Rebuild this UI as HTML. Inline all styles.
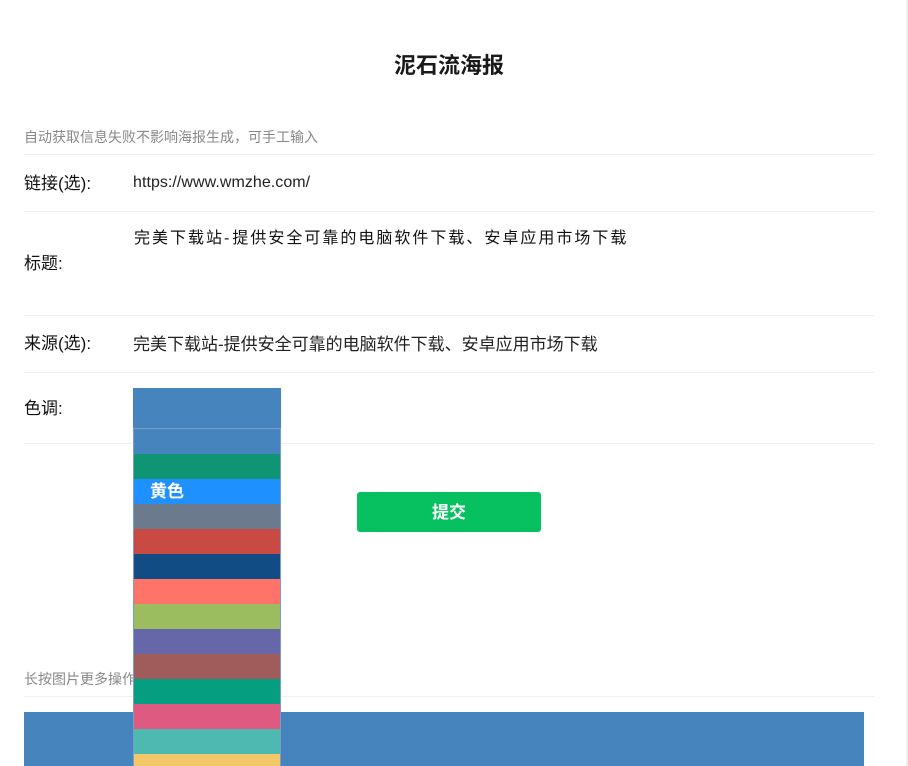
<!DOCTYPE html>
<html lang="zh">
<head>
<meta charset="utf-8">
<style>
html,body{margin:0;padding:0;width:908px;height:766px;overflow:hidden;background:#fff}
body{position:relative;font-family:"Liberation Sans","WenQuanYi Zen Hei","Noto Sans CJK SC",sans-serif;color:#111}
.a{position:absolute;white-space:nowrap}
.line{position:absolute;left:24px;width:850px;height:1px;background:#f0f0f0}
.l{font-size:17px;line-height:24px;left:24px}
.it{position:absolute;left:134px;width:146px;height:25px}
</style>
</head>
<body>
<div class="a" style="left:906px;top:0;width:2px;height:766px;background:#f0f0f0"></div>
<div class="a" style="left:0;width:898px;top:51px;text-align:center;font-size:22px;line-height:30px;font-weight:bold;color:#191919">泥石流海报</div>

<div class="a" style="left:24px;top:127px;font-size:14px;line-height:20px;color:#888">自动获取信息失败不影响海报生成，可手工输入</div>
<div class="line" style="top:154px"></div>

<div class="a l" style="top:172px">链接(选):</div>
<div class="a" style="left:133px;top:171px;font-size:16px;line-height:24px;letter-spacing:.05px;color:#222">https://www.wmzhe.com/</div>
<div class="line" style="top:211px"></div>

<div class="a l" style="top:252px">标题:</div>
<div class="a" style="left:134px;top:228px;font-size:16px;line-height:22px;letter-spacing:2px;color:#111">完美下载站<span style="letter-spacing:3px">-</span>提供安全可靠的电脑软件下载、安卓应用市场下载</div>
<div class="line" style="top:315px"></div>

<div class="a l" style="top:332px">来源(选):</div>
<div class="a" style="left:133px;top:333px;font-size:17px;line-height:24px;color:#222">完美下载站-提供安全可靠的电脑软件下载、安卓应用市场下载</div>
<div class="line" style="top:372px"></div>

<div class="a l" style="top:397px">色调:</div>
<div class="line" style="top:443px"></div>

<div class="a" style="left:357px;top:492px;width:184px;height:40px;background:#07c160;border-radius:3px;color:#fff;font-size:17px;font-weight:bold;line-height:42px;text-align:center">提交</div>

<div class="a" style="left:24px;top:669px;font-size:14px;line-height:20px;color:#888">长按图片更多操作</div>
<div class="line" style="top:696px"></div>
<div class="a" style="left:24px;top:712px;width:840px;height:54px;background:#4584bc"></div>

<div class="a" style="left:133px;top:388px;width:148px;height:40px;background:#4584bc"></div>
<div class="a" style="left:133px;top:428px;width:146px;height:338px;border:1px solid #7b9bd0;border-bottom:0;background:#4584bc"></div>
<div class="it" style="top:429px;background:#4584bc"></div>
<div class="it" style="top:454px;background:#0f9474"></div>
<div class="it" style="top:479px;background:#1e90ff;color:#fff;font-size:17px;font-weight:bold;line-height:25px;text-indent:16px">黄色</div>
<div class="it" style="top:504px;background:#6b7b8d"></div>
<div class="it" style="top:529px;background:#c94a43"></div>
<div class="it" style="top:554px;background:#114c84"></div>
<div class="it" style="top:579px;background:#ff7369"></div>
<div class="it" style="top:604px;background:#9bbd5f"></div>
<div class="it" style="top:629px;background:#6667a8"></div>
<div class="it" style="top:654px;background:#a05c5a"></div>
<div class="it" style="top:679px;background:#059e80"></div>
<div class="it" style="top:704px;background:#df5a80"></div>
<div class="it" style="top:729px;background:#4eb9b1"></div>
<div class="it" style="top:754px;height:12px;background:#f4c869"></div>
</body>
</html>
